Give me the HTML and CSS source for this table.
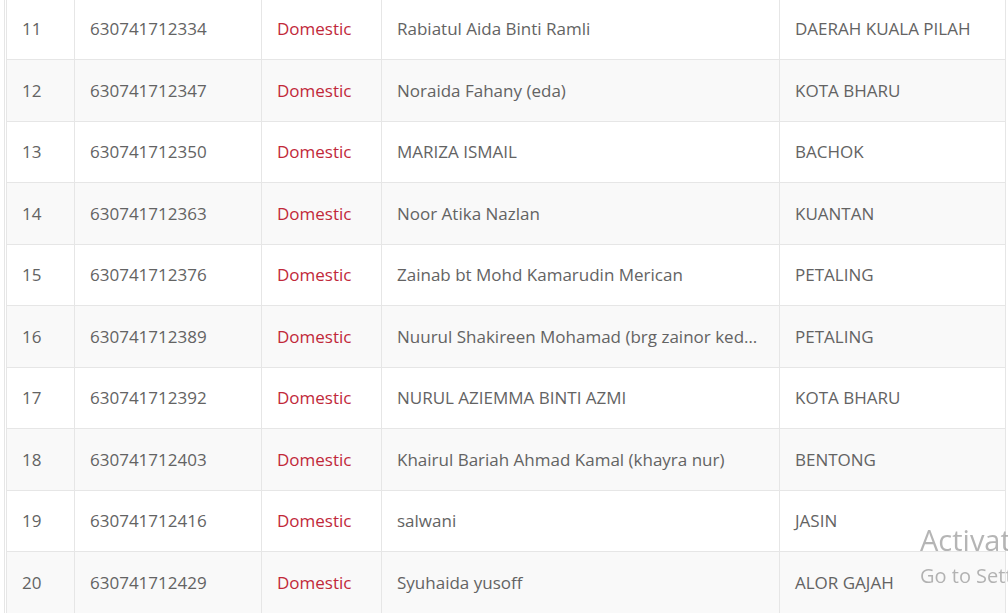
FILE: index.html
```html
<!DOCTYPE html>
<html>
<head>
<meta charset="utf-8">
<link rel="stylesheet" href="styles.css">
</head>
<body>
<div class="wrap">
<table class="grid">
<colgroup>
<col class="c-no"><col class="c-id"><col class="c-type"><col class="c-name"><col class="c-area">
</colgroup>
<tbody>
<tr><td>11</td><td>630741712334</td><td class="type">Domestic</td><td class="name">Rabiatul Aida Binti Ramli</td><td>DAERAH KUALA PILAH</td></tr>
<tr><td>12</td><td>630741712347</td><td class="type">Domestic</td><td class="name">Noraida Fahany (eda)</td><td>KOTA BHARU</td></tr>
<tr><td>13</td><td>630741712350</td><td class="type">Domestic</td><td class="name">MARIZA ISMAIL</td><td>BACHOK</td></tr>
<tr><td>14</td><td>630741712363</td><td class="type">Domestic</td><td class="name">Noor Atika Nazlan</td><td>KUANTAN</td></tr>
<tr><td>15</td><td>630741712376</td><td class="type">Domestic</td><td class="name">Zainab bt Mohd Kamarudin Merican</td><td>PETALING</td></tr>
<tr><td>16</td><td>630741712389</td><td class="type">Domestic</td><td class="name"><div class="clip">Nuurul Shakireen Mohamad (brg zainor kedai runcit)</div></td><td>PETALING</td></tr>
<tr><td>17</td><td>630741712392</td><td class="type">Domestic</td><td class="name">NURUL AZIEMMA BINTI AZMI</td><td>KOTA BHARU</td></tr>
<tr><td>18</td><td>630741712403</td><td class="type">Domestic</td><td class="name">Khairul Bariah Ahmad Kamal (khayra nur)</td><td>BENTONG</td></tr>
<tr><td>19</td><td>630741712416</td><td class="type">Domestic</td><td class="name">salwani</td><td>JASIN</td></tr>
<tr><td>20</td><td>630741712429</td><td class="type">Domestic</td><td class="name">Syuhaida yusoff</td><td>ALOR GAJAH</td></tr>
</tbody>
</table>
</div>
<div class="watermark">
<div class="wm-title">Activate Windows</div>
<div class="wm-sub">Go to Settings to activate Windows.</div>
</div>
</body>
</html>
```
FILE: styles.css
```css
html, body {
  margin: 0;
  padding: 0;
  background: #fff;
  overflow: hidden;
  height: 613px;
}
body {
  font-family: "Open Sans", "Noto Sans", sans-serif;
  color: #636363;
  font-size: 17px;
}
.wrap {
  margin-left: 4px;
  margin-top: -2.5px;
  width: 1001px;
  border-left: 1px solid #e6e6e6;
  border-right: 1px solid #e6e6e6;
  padding: 0 1px;
}
.grid {
  border-collapse: collapse;
  table-layout: fixed;
  width: 999px;
}
.c-no { width: 68px; }
.c-id { width: 187px; }
.c-type { width: 120px; }
.c-name { width: 398px; }
.c-area { width: 226px; }
.grid td {
  border: 1px solid #e6e6e6;
  height: 61.5px;
  box-sizing: border-box;
  padding: 0 15px;
  vertical-align: middle;
  white-space: nowrap;
  overflow: hidden;
}
.grid tr:nth-child(even) td {
  background: #f9f9f9;
}
.grid td.type {
  color: #c1283a;
}
.clip {
  overflow: hidden;
  text-overflow: ellipsis;
  white-space: nowrap;
}
.watermark {
  position: fixed;
  left: 920px;
  top: 520px;
  white-space: nowrap;
  color: rgba(120, 120, 120, 0.55);
}
.wm-title {
  font-size: 29px;
  line-height: 40px;
}
.wm-sub {
  font-size: 20px;
  line-height: 32px;
}
```
